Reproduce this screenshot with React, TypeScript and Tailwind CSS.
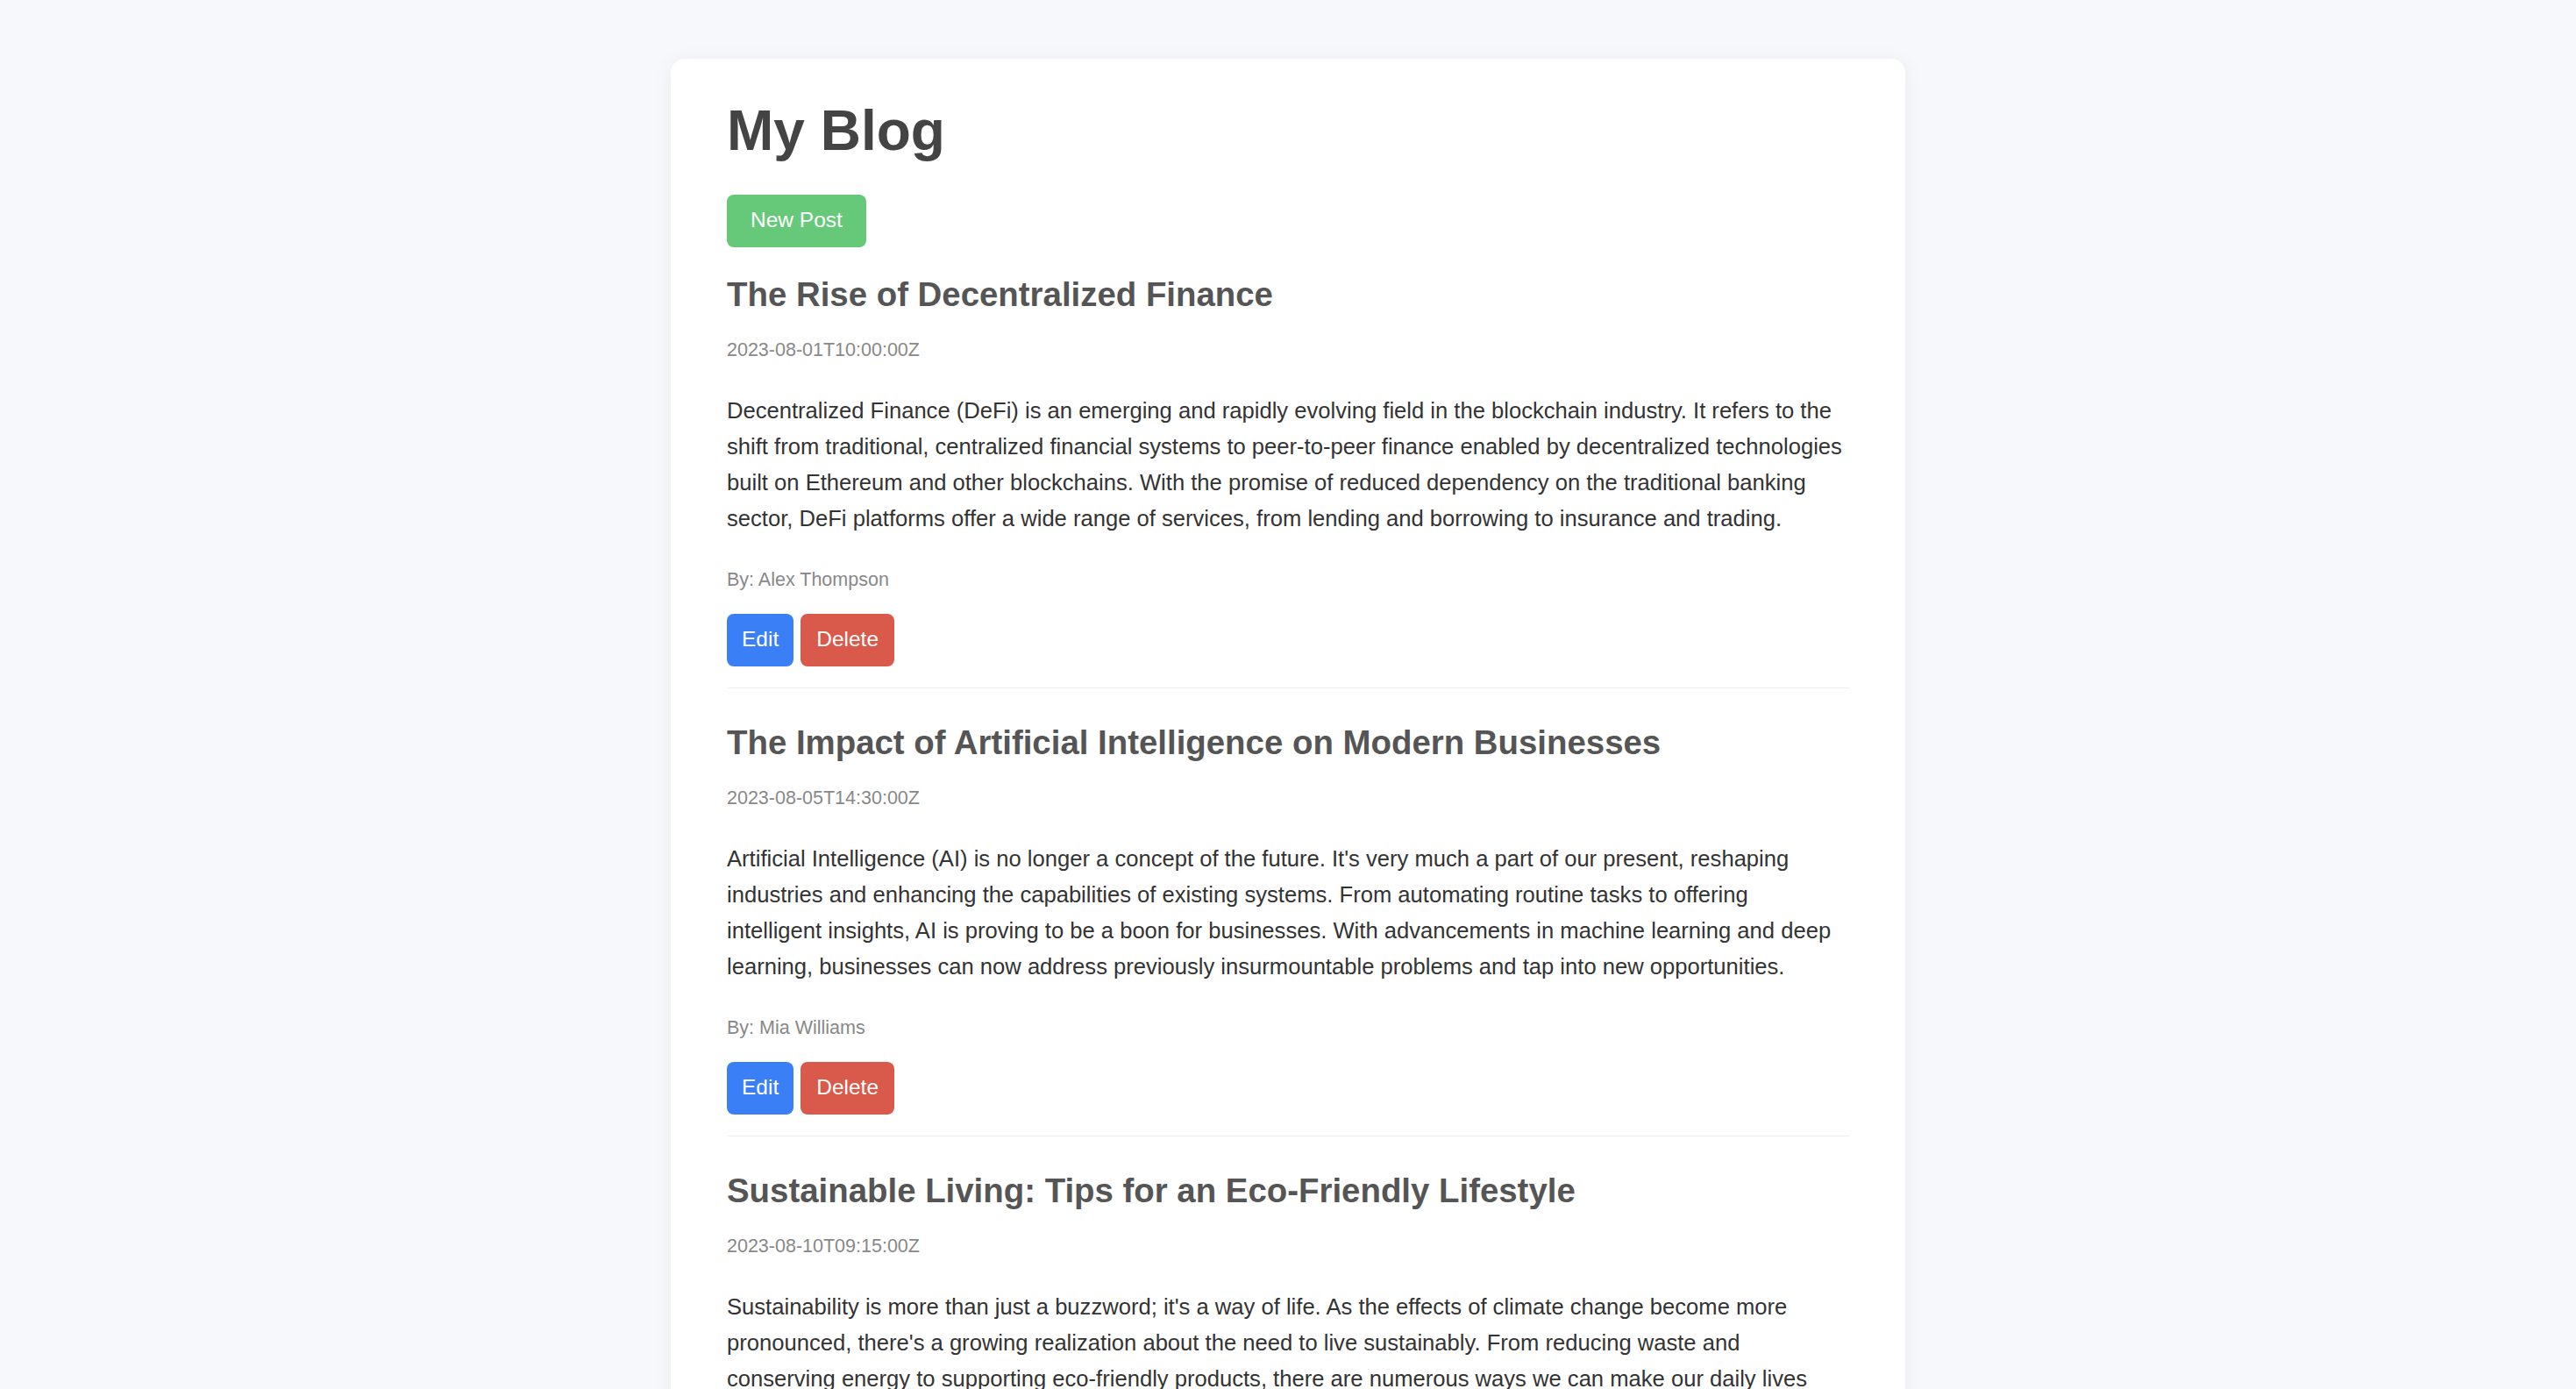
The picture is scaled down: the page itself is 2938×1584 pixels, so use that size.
type Post = {
  id: number;
  title: string;
  date: string;
  body: string;
  author: string;
};

const posts: Post[] = [
  {
    id: 1,
    title: "The Rise of Decentralized Finance",
    date: "2023-08-01T10:00:00Z",
    body: "Decentralized Finance (DeFi) is an emerging and rapidly evolving field in the blockchain industry. It refers to the shift from traditional, centralized financial systems to peer-to-peer finance enabled by decentralized technologies built on Ethereum and other blockchains. With the promise of reduced dependency on the traditional banking sector, DeFi platforms offer a wide range of services, from lending and borrowing to insurance and trading.",
    author: "Alex Thompson",
  },
  {
    id: 2,
    title: "The Impact of Artificial Intelligence on Modern Businesses",
    date: "2023-08-05T14:30:00Z",
    body: "Artificial Intelligence (AI) is no longer a concept of the future. It's very much a part of our present, reshaping industries and enhancing the capabilities of existing systems. From automating routine tasks to offering intelligent insights, AI is proving to be a boon for businesses. With advancements in machine learning and deep learning, businesses can now address previously insurmountable problems and tap into new opportunities.",
    author: "Mia Williams",
  },
  {
    id: 3,
    title: "Sustainable Living: Tips for an Eco-Friendly Lifestyle",
    date: "2023-08-10T09:15:00Z",
    body: "Sustainability is more than just a buzzword; it's a way of life. As the effects of climate change become more pronounced, there's a growing realization about the need to live sustainably. From reducing waste and conserving energy to supporting eco-friendly products, there are numerous ways we can make our daily lives more sustainable. In this post, we explore practical tips that anyone can adopt to live a greener life.",
    author: "Liam Carter",
  },
];

const PostItem: React.FC<{ post: Post; first: boolean }> = ({ post, first }) => {
  return (
    <article
      className={[
        "border-b border-[#eeeeee] pb-6",
        first ? "mt-[32px]" : "mt-[40px]",
      ].join(" ")}
    >
      <h2 className="text-[38.4px] leading-[1.15] font-bold text-[#555555]">
        {post.title}
      </h2>
      <p className="mt-[25px] text-[21.5px] leading-[32.6px] text-[#888888]">
        {post.date}
      </p>
      <p className="mt-[33px] pr-[4px] text-[25.6px] leading-[40.9px] text-[#333333]">
        {post.body}
      </p>
      <p className="mt-[33px] text-[21.5px] leading-[32.6px] text-[#888888]">
        By: {post.author}
      </p>
      <div className="mt-[22px] flex gap-2">
        <button className="h-[60px] px-[17px] rounded-lg bg-[#3b7ff7] text-white text-[24.5px]">
          Edit
        </button>
        <button className="h-[60px] px-[18px] rounded-lg bg-[#d95a4a] text-white text-[24.5px]">
          Delete
        </button>
      </div>
    </article>
  );
};

export default function App() {
  return (
    <div
      className="min-h-screen bg-[#f7f8fc] pt-[67px] pb-16"
      style={{ fontFamily: '"Liberation Sans", Arial, Helvetica, sans-serif' }}
    >
      <main className="mx-auto w-[1408px] rounded-2xl bg-white px-16 pt-[46px] pb-16 shadow-[0_4px_24px_rgba(0,0,0,0.06)]">
        <h1 className="text-[64px] leading-[1.15] font-bold text-[#444444]">
          My Blog
        </h1>
        <button className="mt-[35px] h-[60px] px-[27px] rounded-lg bg-[#66c97a] text-white text-[24.5px]">
          New Post
        </button>
        <section>
          {posts.map((post, i) => (
            <PostItem key={post.id} post={post} first={i === 0} />
          ))}
        </section>
      </main>
    </div>
  );
}
